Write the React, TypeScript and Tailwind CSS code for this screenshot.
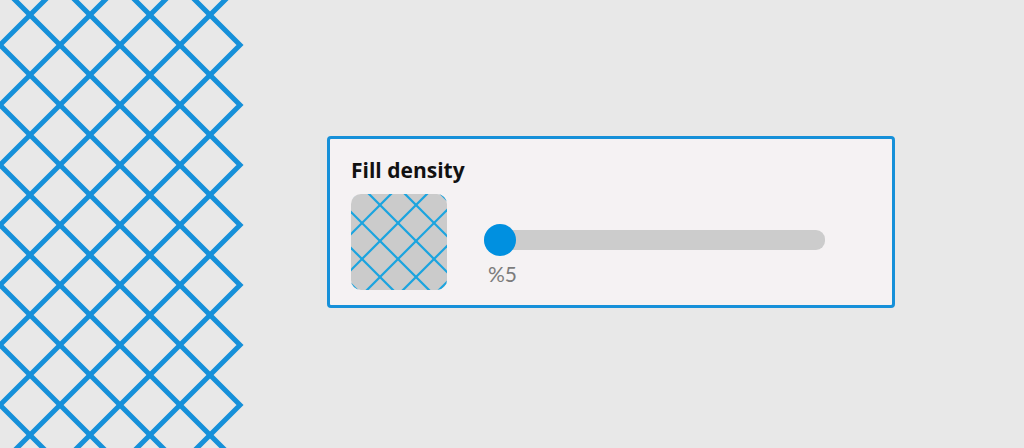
import { useState } from 'react'

// tips of the big lattice on its right edge (x = 240), one every 60px
const bigTips = Array.from({ length: 18 }, (_, i) => -315 + i * 60)

// thumbnail lattice lines (x - y = a) and (x + y = b)
const diagA = [-126, -90, -54, -18, 18, 54, 90]
const diagB = [4, 40, 76, 112, 148, 184]

function BigLattice() {
  return (
    <svg width="250" height="448" viewBox="0 0 250 448" className="shrink-0">
      {bigTips.map((y) => (
        <polyline
          key={y}
          points={`-360,${y - 600} 240,${y} -360,${y + 600}`}
          fill="none"
          stroke="#1690d9"
          strokeWidth="5"
          strokeLinejoin="miter"
        />
      ))}
    </svg>
  )
}

function Thumb() {
  return (
    <div className="w-[96px] h-[96px] rounded-[10px] overflow-hidden bg-[#cbcbcb] shrink-0">
      <svg width="96" height="96" viewBox="0 0 96 96">
        {diagA.map((a) => (
          <line key={'a' + a} x1={a - 20} y1={-20} x2={a + 120} y2={120} stroke="#1ba4df" strokeWidth="2.2" />
        ))}
        {diagB.map((b) => (
          <line key={'b' + b} x1={b + 20} y1={-20} x2={b - 120} y2={120} stroke="#1ba4df" strokeWidth="2.2" />
        ))}
      </svg>
    </div>
  )
}

export default function App() {
  const [value] = useState(5)

  return (
    <div className="w-full h-[448px] bg-[#e8e8e8] flex overflow-hidden font-['Lato',sans-serif]">
      <BigLattice />

      <div className="ml-[77px] mt-[136px] self-start w-[568px] h-[172px] border-[3px] border-[#1690d9] rounded-[4px] bg-[#f5f2f3] pl-[21px] pt-[19px]">
        <h3 className="font-['Open_Sans',sans-serif] text-[21px] leading-[24px] font-bold text-[#111111]">Fill density</h3>

        <div className="flex mt-[12px]">
          <Thumb />

          <div className="ml-[37px] pt-[30px] flex flex-col">
            <div className="relative w-[341px] h-[32px] flex items-center">
              <div className="w-full h-[20px] rounded-[9px] bg-[#cccccc]" />
              <div className="absolute left-0 top-0 w-[32px] h-[32px] rounded-full bg-[#0090e0]" />
            </div>
            <span className="mt-[6px] ml-[4px] text-[21px] leading-[24px] text-[#7c7c7c]">%{value}</span>
          </div>
        </div>
      </div>
    </div>
  )
}
